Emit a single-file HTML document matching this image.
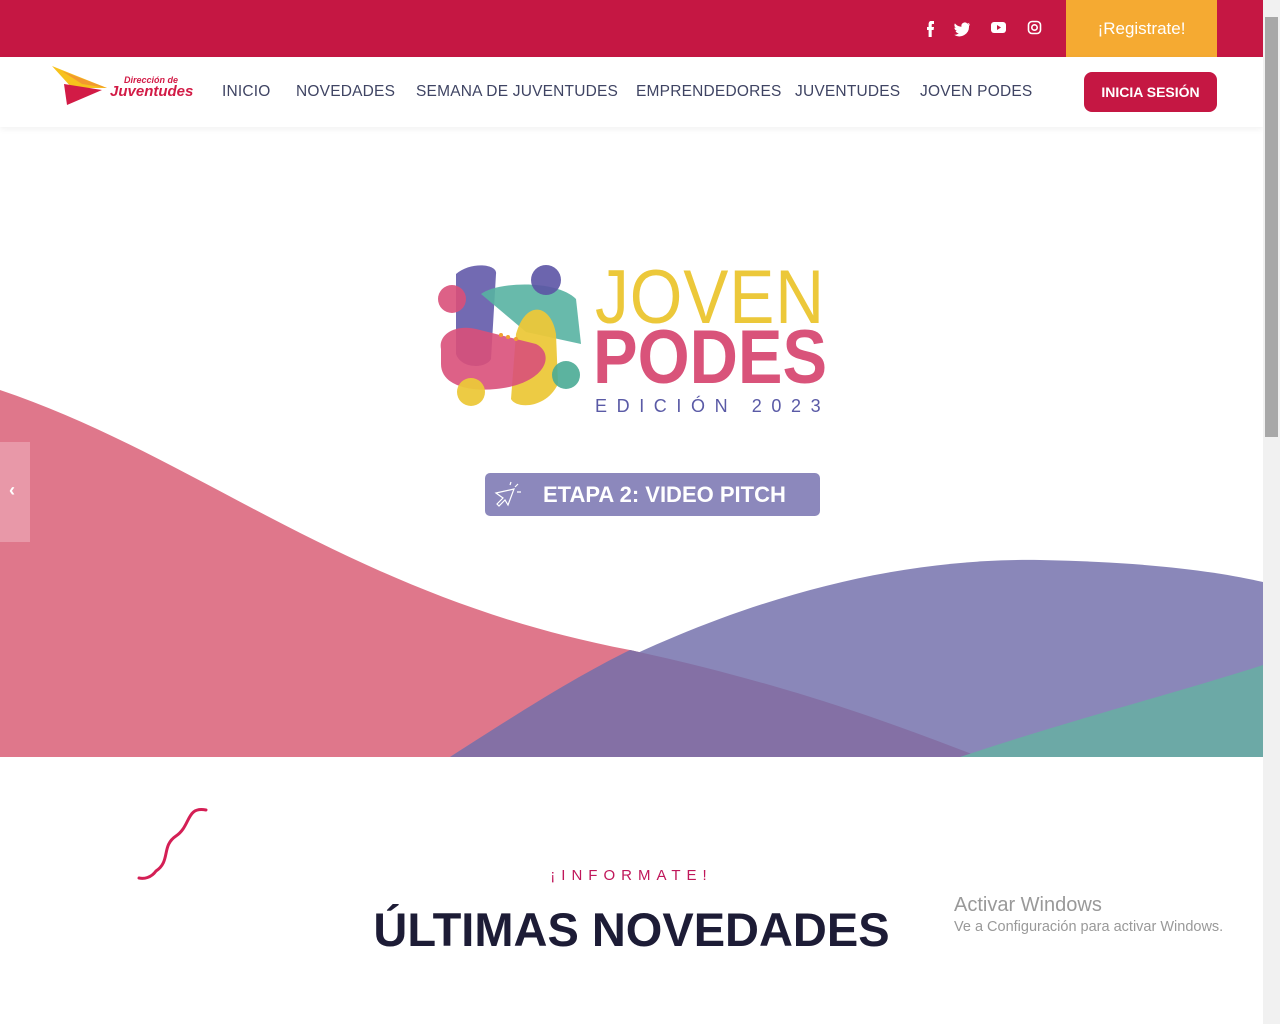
<!DOCTYPE html>
<html><head><meta charset="utf-8"><style>
*{margin:0;padding:0;box-sizing:border-box}
body{width:1280px;height:1024px;overflow:hidden;background:#fff;font-family:"Liberation Sans",sans-serif;position:relative}
.top{position:absolute;left:0;top:0;width:1263px;height:57px;background:#c51743}
.reg{position:absolute;left:1066px;top:0;width:151px;height:57px;background:#f5aa32;color:#fff;font-size:17px;text-align:center;line-height:57px}
.nav{position:absolute;left:0;top:57px;width:1263px;height:70px;background:#fff;box-shadow:0 2px 6px rgba(0,0,0,.06)}
.nav a{position:absolute;top:26px;font-size:15.5px;color:#3f4463;letter-spacing:.2px}
.btn{position:absolute;left:1084px;top:72px;width:133px;height:40px;background:#c51743;border-radius:8px;color:#fff;font-size:14px;font-weight:bold;text-align:center;line-height:40px}
.sb{position:absolute;left:1263px;top:0;width:17px;height:1024px;background:#f1f1f1}
.th{position:absolute;left:1265px;top:17px;width:13px;height:420px;background:#a8a8a8}
</style></head><body>
<div class="top"></div>
<svg style="position:absolute;left:924px;top:19px" width="125" height="18" fill="#fff">
<path d="M7 2h3v3H8.5c-.5 0-.8.3-.8.8V8H10l-.4 3H7.7v7H4.6v-7H3V8h1.6V5.5C4.6 3.3 5.5 2 7 2z"/>
<path d="M46 5c-.6.3-1.3.5-2 .6.7-.4 1.2-1 1.5-1.8-.7.4-1.4.7-2.2.8a3.4 3.4 0 00-5.8 3.1C34.700 7.600 32.400 6.300 30.900 4.400c-1 1.600-.4 3.600 1 4.500-.5 0-1-.2-1.500-.4 0 1.700 1.200 3.100 2.700 3.400-.5.100-1 .200-1.500.100.400 1.400 1.700 2.300 3.200 2.400A6.900 6.900 0 0130 15.800 9.700 9.700 0 0045 7.200z"/>
<rect x="67" y="3" width="15" height="11" rx="3"/><path d="M73 6v5l4-2.500z" fill="#c51743"/>
<rect x="104.500" y="2.500" width="12" height="12" rx="3.500" fill="none" stroke="#fff" stroke-width="1.600"/><circle cx="110.500" cy="8.500" r="2.700" fill="none" stroke="#fff" stroke-width="1.600"/>
</svg>
<div class="reg">¡Registrate!</div>
<div class="nav">
<svg style="position:absolute;left:52px;top:9px" width="145" height="40">
<polygon points="0,0 55,22 20,22" fill="#f7c21c"/><polygon points="10,5 55,22 30,18" fill="#f29a2e"/>
<polygon points="12,18 50,24 15,39" fill="#d21b46"/>
<text x="72" y="17" font-size="9" font-weight="bold" font-style="italic" fill="#d21b46" font-family="Liberation Sans">Dirección de</text>
<text x="58" y="30" font-size="15" font-weight="bold" font-style="italic" fill="#d21b46" font-family="Liberation Sans">Juventudes</text>
</svg>
<a style="left:222px">INICIO</a><a style="left:296px">NOVEDADES</a><a style="left:416px">SEMANA DE JUVENTUDES</a><a style="left:636px">EMPRENDEDORES</a><a style="left:795px">JUVENTUDES</a><a style="left:920px">JOVEN PODES</a>
</div>
<div class="btn">INICIA SESIÓN</div>
<svg style="position:absolute;left:0;top:127px" width="1263" height="630">
<path d="M0 263C200 330 350 470 630 523C800 560 900 600 980 630H0Z" fill="#df778b"/>
<path d="M450 630C650 500 850 430 1040 433C1150 435 1220 445 1263 455V630Z" fill="#8a87b9"/>
<path d="M630 523C800 560 900 600 980 630H450C520 585 575 550 630 523Z" fill="#8470a5"/>
<path d="M960 630C1080 590 1180 565 1263 538V630Z" fill="#6ca9a6"/>
</svg>
<div style="position:absolute;left:0;top:442px;width:30px;height:100px;background:#e898a8"></div>
<div style="position:absolute;left:9px;top:480px;color:#fff;font-size:18px;font-weight:bold">‹</div>
<svg style="position:absolute;left:436px;top:264px" width="150" height="146">
<g style="mix-blend-mode:multiply">
<path d="M20 10C35-3 62 0 60 10L55 95C50 105 25 105 20 90Z" fill="#6a62ae" opacity=".95"/>
<path d="M45 30C60 18 120 15 140 35L145 80L90 68Z" fill="#58b2a2" opacity=".9"/>
<circle cx="110" cy="16" r="15" fill="#5c54a5" opacity=".9"/>
<path d="M80 70C90 35 115 40 120 70L122 120C110 145 80 145 75 135Z" fill="#ecc83a" opacity=".95"/>
<path d="M5 85C2 70 20 60 40 65L100 80C120 90 110 120 60 125C30 128 5 120 5 100Z" fill="#d9507a" opacity=".9"/>
<circle cx="16" cy="35" r="14" fill="#d9507a" opacity=".9"/><circle cx="35" cy="128" r="14" fill="#ecc83a" opacity=".95"/>
<circle cx="130" cy="111" r="14" fill="#4aab95" opacity=".9"/>
</g>
<circle cx="65" cy="71" r="2" fill="#f0a030"/><circle cx="72" cy="73" r="2" fill="#f0a030"/><circle cx="80" cy="75" r="2" fill="#f0a030"/>
</svg>
<div style="position:absolute;left:595px;top:258px;font-size:76px;color:#ecc83a;letter-spacing:1px;line-height:80px;transform:scaleX(.89);transform-origin:left">JOVEN</div>
<div style="position:absolute;left:593px;top:318px;font-size:76px;font-weight:bold;color:#d9537a;line-height:80px;transform:scaleX(.88);transform-origin:left">PODES</div>
<div style="position:absolute;left:595px;top:396px;font-size:18px;color:#5a5aa6;letter-spacing:9.6px">EDICIÓN 2023</div>
<div style="position:absolute;left:485px;top:473px;width:335px;height:43px;background:#8c88bc;border-radius:5px;color:#fff;font-size:22px;font-weight:bold;line-height:43px;padding-left:58px">ETAPA 2: VIDEO PITCH</div>
<svg style="position:absolute;left:494px;top:481px" width="32" height="28" fill="none" stroke="#fff" stroke-width="1.2"><path d="M2 12L20 8L14 24L11 19L5 25L3 23L9 17Z"/><path d="M16 4l1-3M21 6l3-3M23 11l4 0"/></svg>
<svg style="position:absolute;left:136px;top:806px" width="75" height="78"><path d="M70 4C50 0 55 20 40 30C25 40 35 55 20 65C15 72 8 73 3 72" fill="none" stroke="#d41f55" stroke-width="3" stroke-linecap="round"/></svg>
<div style="position:absolute;left:0;width:1263px;top:867px;text-align:center;font-size:15px;letter-spacing:6px;color:#c0175a">¡INFORMATE!</div>
<div style="position:absolute;left:0;width:1263px;top:902px;text-align:center;font-size:47px;font-weight:bold;color:#1d1c36">ÚLTIMAS NOVEDADES</div>
<div style="position:absolute;left:954px;top:894px;font-size:20px;color:#999">Activar Windows</div>
<div style="position:absolute;left:954px;top:919px;font-size:14.5px;color:#999">Ve a Configuración para activar Windows.</div>
<div class="sb"></div><div class="th"></div>
</body></html>
